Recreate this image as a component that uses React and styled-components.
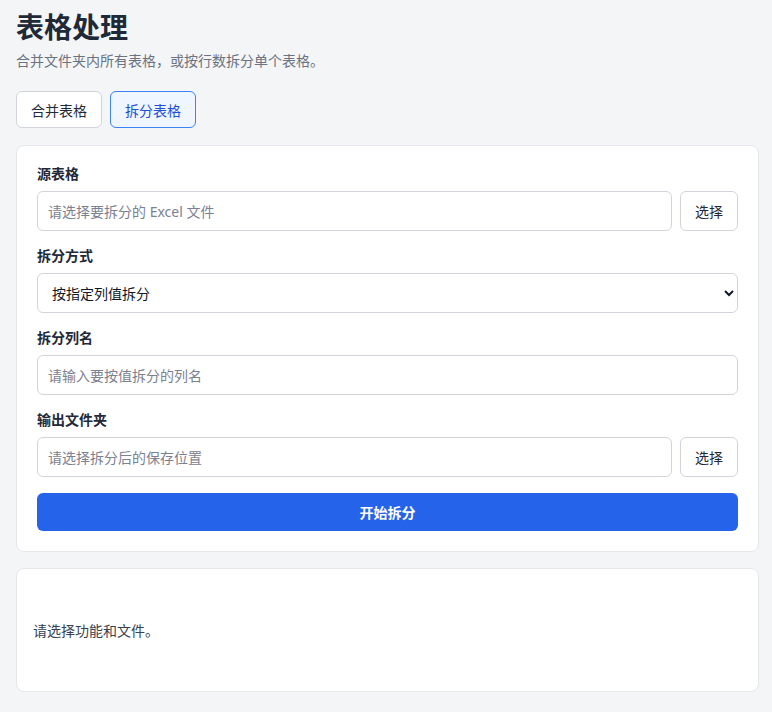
import React, { useState } from 'react';
import styled, { createGlobalStyle } from 'styled-components';

const GlobalStyle = createGlobalStyle`
  * { box-sizing: border-box; }
  body {
    margin: 0;
    background: #f4f5f7;
    font-family: "Noto Sans", "Noto Sans CJK SC", sans-serif;
    font-size: 14px;
    color: #1f2937;
  }
`;

const Page = styled.div`
  padding: 10px 13px 16px 16px;
`;

const Title = styled.h1`
  margin: 0;
  font-size: 28px;
  line-height: 34px;
  font-weight: 700;
  color: #1f2937;
`;

const Subtitle = styled.p`
  margin: 7px 0 0;
  font-size: 14px;
  line-height: 20px;
  color: #6b7280;
`;

const Tabs = styled.div`
  display: flex;
  gap: 8px;
  margin-top: 20px;
`;

const Tab = styled.button`
  height: 37px;
  padding: 0 14px;
  font-family: inherit;
  font-size: 14px;
  border-radius: 6px;
  cursor: pointer;
  border: 1px solid ${p => (p.$active ? '#3b82f6' : '#d1d5db')};
  background: ${p => (p.$active ? '#eff6ff' : '#ffffff')};
  color: ${p => (p.$active ? '#1d4ed8' : '#1f2937')};
`;

const Card = styled.section`
  margin-top: 17px;
  background: #ffffff;
  border: 1px solid #e5e7eb;
  border-radius: 8px;
  padding: 19px 20px 20px;
  display: flex;
  flex-direction: column;
  gap: 16px;
`;

const Field = styled.div`
  display: flex;
  flex-direction: column;
  gap: 8px;
`;

const Label = styled.label`
  font-size: 14px;
  line-height: 18px;
  font-weight: 700;
  color: #1f2937;
`;

const Row = styled.div`
  display: flex;
  gap: 8px;
`;

const Input = styled.input`
  flex: ${p => (p.$grow ? 1 : 'none')};
  min-width: 0;
  height: 40px;
  padding: 0 10px;
  border: 1px solid #d1d5db;
  border-radius: 6px;
  font-family: inherit;
  font-size: 14px;
  color: #1f2937;
  background: #fff;
  &::placeholder { color: #7b8190; }
`;

const Select = styled.select`
  height: 40px;
  padding: 0 10px;
  border: 1px solid #d1d5db;
  border-radius: 6px;
  font-family: inherit;
  font-size: 14px;
  color: #111827;
  background: #fff;
`;

const PickButton = styled.button`
  width: 58px;
  height: 40px;
  border: 1px solid #d1d5db;
  border-radius: 6px;
  background: #fff;
  font-family: inherit;
  font-size: 14px;
  color: #1f2937;
  cursor: pointer;
`;

const Primary = styled.button`
  height: 38px;
  border: none;
  border-radius: 6px;
  background: #2563eb;
  color: #fff;
  font-family: inherit;
  font-size: 14px;
  font-weight: 700;
  cursor: pointer;
`;

const Output = styled.div`
  margin-top: 16px;
  min-height: 124px;
  background: #ffffff;
  border: 1px solid #e5e7eb;
  border-radius: 8px;
  padding: 16px;
  display: flex;
  align-items: center;
  font-size: 14px;
  color: #374151;
`;

export default function App() {
  const [mode, setMode] = useState('split');

  return (
    <Page>
      <GlobalStyle />
      <Title>表格处理</Title>
      <Subtitle>合并文件夹内所有表格，或按行数拆分单个表格。</Subtitle>
      <Tabs>
        <Tab $active={mode === 'merge'} onClick={() => setMode('merge')}>合并表格</Tab>
        <Tab $active={mode === 'split'} onClick={() => setMode('split')}>拆分表格</Tab>
      </Tabs>
      <Card>
        <Field>
          <Label>源表格</Label>
          <Row>
            <Input $grow placeholder="请选择要拆分的 Excel 文件" />
            <PickButton>选择</PickButton>
          </Row>
        </Field>
        <Field>
          <Label>拆分方式</Label>
          <Select defaultValue="column">
            <option value="column">按指定列值拆分</option>
            <option value="rows">按行数拆分</option>
          </Select>
        </Field>
        <Field>
          <Label>拆分列名</Label>
          <Input placeholder="请输入要按值拆分的列名" />
        </Field>
        <Field>
          <Label>输出文件夹</Label>
          <Row>
            <Input $grow placeholder="请选择拆分后的保存位置" />
            <PickButton>选择</PickButton>
          </Row>
        </Field>
        <Primary>开始拆分</Primary>
      </Card>
      <Output>请选择功能和文件。</Output>
    </Page>
  );
}
